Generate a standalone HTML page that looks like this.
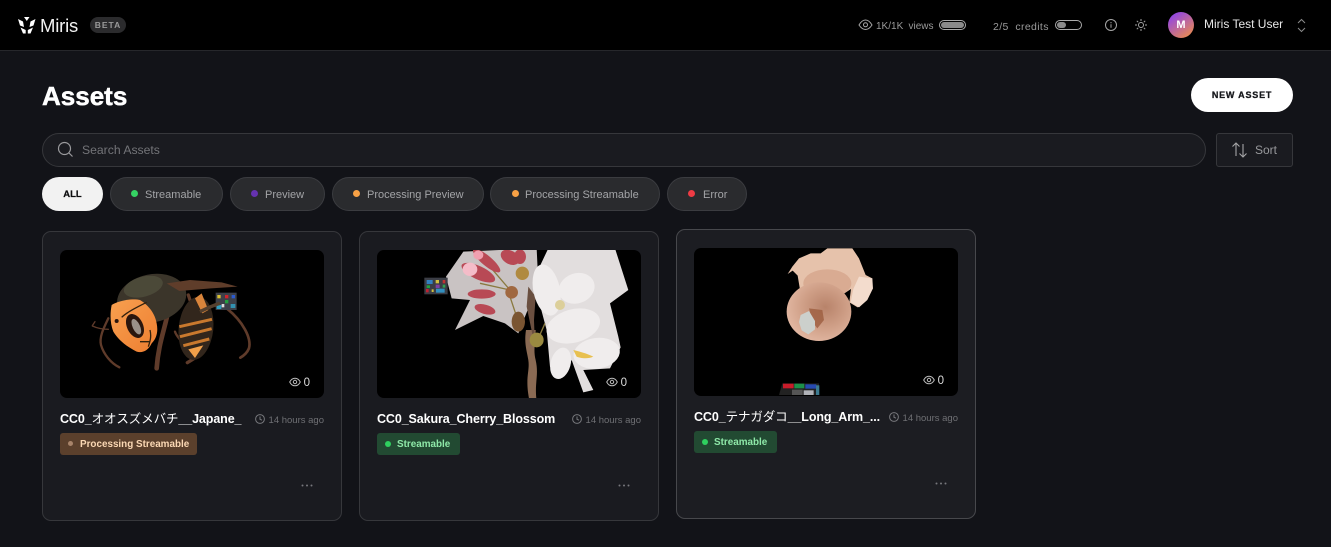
<!DOCTYPE html>
<html><head><meta charset="utf-8"><title>Assets</title>
<style>
*{box-sizing:border-box;margin:0;padding:0}
html,body{width:1331px;height:547px;overflow:hidden;background:#121318;font-family:"Liberation Sans","Noto Sans CJK JP",sans-serif;color:#fff}
.a{position:absolute;white-space:nowrap}
.top{position:absolute;left:0;top:0;width:1331px;height:51px;background:#000;border-bottom:1px solid #26272b}
.pill{position:absolute;top:177px;height:34px;border-radius:17px;background:#2a2b2e;border:1px solid #3b3c40;font-size:11px;color:#a3a4a7;line-height:34px;white-space:nowrap}
.pill i{position:absolute;top:12px;width:7px;height:7px;border-radius:50%}
.card{position:absolute;width:300px;height:290px;background:#1a1b20;border:1px solid #36373b;border-radius:9px}
.img{position:absolute;left:17px;top:18px;width:264px;height:148px;border-radius:7px;background:#000;overflow:hidden}
.img>svg{position:absolute;left:0;top:0}
.title{position:absolute;left:17px;top:179px;font-size:12.5px;font-weight:bold;line-height:16px;white-space:nowrap;letter-spacing:-.1px}
.title span{font-weight:normal}
.time{position:absolute;right:17px;top:182px;font-size:9.5px;color:#6f7074;line-height:13px;white-space:nowrap}
.clock{position:absolute;left:212px;top:182px}
.tag{position:absolute;left:17px;top:201px;height:22px;border-radius:3px;font-size:9.9px;font-weight:bold;line-height:24px;white-space:nowrap}
.tag i{position:absolute;left:8px;top:8px;width:6px;height:6px;border-radius:50%}
.green{background:#224a32;color:#8ee8a8;width:83px;padding-left:20px}
.green i{background:#2fd05f}
.brown{background:#5b402c;color:#fbd8b4;width:137px;padding-left:20px}
.brown i{background:#a8846a;width:5px;height:5px}
.dots{position:absolute;left:258px;top:252px;width:12px;height:3px}
.views{position:absolute;right:14px;bottom:9px;font-size:11.500px;color:#ddd;line-height:12px;white-space:nowrap}
</style></head><body>
<div class="top"></div>
<svg class="a" style="left:18px;top:17px" width="18" height="17" viewBox="0 0 18 17"><path d="M0 2l5 2.500L6 10 2 8.500z M17.500 2l-5 2.500L11.500 10l4-1.500z M6 0h5.500L8.800 4z M2.500 10.500l5.200 2.500v3.500H5z M15 10.500L9.800 13v3.500h2.700z" fill="#fff"/></svg>
<div class="a" style="left:40px;top:15px;font-size:18.500px;line-height:22px;color:#f2f2f2;letter-spacing:-.2px">Miris</div>
<div class="a" style="left:90px;top:17px;width:36px;height:16px;border-radius:8px;background:#2b2b2d;color:#9a9a9a;font-size:8.500px;font-weight:bold;line-height:17px;text-align:center;letter-spacing:1px">BETA</div>
<svg class="a" style="left:858px;top:19px" width="15" height="12" viewBox="0 0 15 12" fill="none" stroke="#a5a5a5"><path d="M1 6c2-3.500 4-5 6.500-5S12 2.500 14 6c-2 3-4 4.500-6.500 4.500S3 9 1 6z"/><circle cx="7.500" cy="5.800" r="2"/></svg>
<div class="a" style="left:876px;top:20px;font-size:10px;line-height:14px;color:#9a9a9a;word-spacing:2.500px">1K/1K views</div>
<div class="a" style="left:939px;top:20px;width:27px;height:10px;border:1px solid #aaa;border-radius:5px"><div style="position:absolute;left:1px;top:1px;right:1px;bottom:1px;border-radius:4px;background:#8a8a8a"></div></div>
<div class="a" style="left:993px;top:20px;font-size:10.500px;line-height:14px;color:#9a9a9a;word-spacing:3.500px;letter-spacing:.35px">2/5 credits</div>
<div class="a" style="left:1055px;top:20px;width:27px;height:10px;border:1px solid #aaa;border-radius:5px"><div style="position:absolute;left:1px;top:1px;width:9px;bottom:1px;border-radius:4px;background:#8a8a8a"></div></div>
<svg class="a" style="left:1104px;top:18px" width="14" height="14" viewBox="0 0 14 14" fill="none" stroke="#a5a5a5"><circle cx="7" cy="7" r="5.500"/><path d="M7 6.300v3.500M7 4v1.200"/></svg>
<svg class="a" style="left:1134px;top:18px" width="14" height="14" viewBox="0 0 14 14" fill="none" stroke="#a5a5a5"><circle cx="7" cy="7" r="2.500"/><path d="M7 1v2M7 11v2M1 7h2M11 7h2M2.800 2.800l1.400 1.400M9.800 9.800l1.400 1.400M2.800 11.200l1.400-1.400M9.800 4.200l1.400-1.400"/></svg>
<div class="a" style="left:1168px;top:12px;width:26px;height:26px;border-radius:50%;background:linear-gradient(145deg,#9448e0 15%,#e98a52 90%);font-size:11px;font-weight:bold;line-height:27px;text-align:center">M</div>
<div class="a" style="left:1204px;top:17px;font-size:12px;line-height:15px;color:#e8e8e8">Miris Test User</div>
<svg class="a" style="left:1296px;top:18px" width="11" height="15" viewBox="0 0 11 15" fill="none" stroke="#8a8a8a"><path d="M2 5l3.500-3.500L9 5M2 10l3.500 3.500L9 10"/></svg>

<div class="a" style="left:42px;top:81px;font-size:26px;font-weight:bold;line-height:30px;color:#fff;-webkit-text-stroke:.5px #fff">Assets</div>
<div class="a" style="left:1191px;top:78px;width:102px;height:34px;border-radius:17px;background:#fff;color:#17181c;font-size:9px;font-weight:bold;line-height:34px;text-align:center;letter-spacing:.8px;-webkit-text-stroke:.3px #17181c">NEW ASSET</div>

<div class="a" style="left:42px;top:133px;width:1164px;height:34px;border-radius:17px;background:#1a1b20;border:1px solid #36373b"></div>
<svg class="a" style="left:57px;top:141px" width="17" height="17" viewBox="0 0 17 17" fill="none" stroke="#9a9a9d" stroke-width="1.200"><circle cx="7.500" cy="7.500" r="6"/><path d="M12 12l3.500 3.500"/></svg>
<div class="a" style="left:82px;top:143px;font-size:12.200px;line-height:15px;color:#737478">Search Assets</div>
<div class="a" style="left:1216px;top:133px;width:77px;height:34px;border-radius:3px;background:#1a1b20;border:1px solid #36373b"></div>
<svg class="a" style="left:1231px;top:141px" width="17" height="18" viewBox="0 0 17 18" fill="none" stroke="#a5a5a7" stroke-width="1.100"><path d="M5 15V2M1.500 5.500L5 2l3.500 3.500M12 3v13M8.500 12.500L12 16l3.500-3.500"/></svg>
<div class="a" style="left:1255px;top:143px;font-size:12px;line-height:15px;color:#98999c">Sort</div>

<div class="a" style="left:42px;top:177px;width:61px;height:34px;border-radius:17px;background:#f2f2f2;color:#0d0d0f;font-size:9.500px;font-weight:bold;line-height:35px;text-align:center;-webkit-text-stroke:.2px #0d0d0f">ALL</div>
<div class="pill" style="left:110px;width:113px;padding-left:34px"><i style="left:20px;background:#35d263"></i>Streamable</div>
<div class="pill" style="left:230px;width:95px;padding-left:34px"><i style="left:20px;background:#6532b0"></i>Preview</div>
<div class="pill" style="left:332px;width:152px;padding-left:34px"><i style="left:20px;background:#f8a145"></i>Processing Preview</div>
<div class="pill" style="left:490px;width:170px;padding-left:34px"><i style="left:21px;background:#f8a145"></i>Processing Streamable</div>
<div class="pill" style="left:667px;width:80px;padding-left:35px"><i style="left:20px;background:#ee3b44"></i>Error</div>

<!-- CARD 1 -->
<div class="card" style="left:42px;top:231px">
<div class="img">
<svg width="264" height="148" viewBox="60 250 264 148"><defs><filter id="b"><feGaussianBlur stdDeviation=".6"/></filter><linearGradient id="o" x1="0" y1="0" x2="1" y2="1"><stop offset="0" stop-color="#f7a050"/><stop offset="1" stop-color="#ee7e30"/></linearGradient></defs>
<g transform="translate(40,230) scale(.3333)" filter="url(#b)">
<g fill="none" stroke="#5e3a2a" stroke-linecap="round">
<path d="M205 265c-12 25-28 55-22 80 8 28 30 55 55 67" stroke-width="7"/>
<path d="M205 298c-15 0-30-2-48-10M165 275l-8 12" stroke-width="4"/>
<path d="M385 240c-8 50-30 100-35 175" stroke-width="14"/>
<path d="M445 195c20 60 45 120 35 170-5 15-25 25-38 33" stroke-width="10"/>
<path d="M490 240c25-10 50-25 70-5 50 40 75 90 67 120-5 12-15 22-26 28" stroke-width="8"/>
<path d="M405 305c5 15 20 30 33 42" stroke-width="7"/>
</g>
<ellipse cx="335" cy="205" rx="105" ry="72" transform="rotate(-12 335 205)" fill="#3a342a"/>
<ellipse cx="310" cy="170" rx="60" ry="30" transform="rotate(-15 310 170)" fill="#4c4839"/>
<path d="M380 160l70-10 95 7 48 13-80 5-95 8z" fill="#5e3c2a"/>
<ellipse cx="468" cy="295" rx="52" ry="95" transform="rotate(6 468 295)" fill="#33261a"/>
<g fill="none" stroke="#c9792e" stroke-width="9"><path d="M418 290l98-22M420 320l95-24M430 347l78-20"/></g>
<path d="M465 205l20-15 20 50-18 10z" fill="#d9843a"/>
<path d="M445 358l45-12-25 38z" fill="#f2a04a"/>
<path d="M215 225c25-15 65-20 85-15 25 15 45 40 50 70 5 25 0 45-15 60-10 20-25 30-45 25-30-15-55-35-70-60-10-25-10-55-5-80z" fill="url(#o)"/>
<path d="M245 262c15-15 45-30 75-45M330 300c5 20 0 35-5 50M300 335l30 0" stroke="#33200f" stroke-width="4" fill="none"/>
<ellipse cx="285" cy="288" rx="24" ry="38" transform="rotate(-25 285 288)" fill="#2a1410"/>
<ellipse cx="289" cy="290" rx="11" ry="25" transform="rotate(-25 289 290)" fill="#9a9088"/>
<circle cx="230" cy="273" r="6" fill="#2a1410"/>
<rect x="527" y="188" width="63" height="52" fill="#3c4048"/>
<rect x="532" y="195" width="10" height="10" fill="#d8c030"/><rect x="555" y="195" width="10" height="10" fill="#d0202a"/><rect x="575" y="195" width="10" height="10" fill="#2a5ad0"/><rect x="555" y="210" width="10" height="10" fill="#20a040"/><rect x="530" y="225" width="14" height="12" fill="#30a0c0"/><rect x="545" y="222" width="8" height="10" fill="#ddd"/><rect x="572" y="222" width="14" height="12" fill="#3090b0"/>
<path d="M480 245c20-10 40-20 60-25" stroke="#54402e" stroke-width="10" fill="none"/>
</g></svg>
<div class="views"><svg width="12" height="10" viewBox="0 0 12 10" fill="none" stroke="#bbb" style="vertical-align:-1px;margin-right:3px"><path d="M.7 5C2 2.500 4 1.200 6 1.200S10 2.500 11.300 5C10 7.500 8 8.800 6 8.800S2 7.500.7 5z"/><circle cx="6" cy="5" r="1.700"/></svg>0</div>
</div>
<div class="title">CC0_<span>オオスズメバチ</span>__Japane_</div>
<svg class="clock" width="10" height="10" viewBox="0 0 10 10" fill="none" stroke="#77787c"><circle cx="5" cy="5" r="4.400"/><path d="M5 2.500V5.300l2 .8"/></svg>
<div class="time">14 hours ago</div>
<div class="tag brown"><i></i>Processing Streamable</div>
<svg class="dots" viewBox="0 0 12 3" fill="#77787c"><circle cx="1.500" cy="1.500" r="1"/><circle cx="6" cy="1.500" r="1"/><circle cx="10.500" cy="1.500" r="1"/></svg>
</div>

<!-- CARD 2 -->
<div class="card" style="left:359px;top:231px">
<div class="img">
<svg width="264" height="148" viewBox="377 250 264 148"><defs><filter id="c"><feGaussianBlur stdDeviation=".7"/></filter></defs>
<g transform="translate(370,240) scale(.3333)" filter="url(#c)">
<path d="M228 110L280 35L500 25L505 130L445 280L405 250L340 228L255 270L300 180L245 175z" fill="#c9c3c3"/>
<path d="M468 270c-6 40 2 60 7 90 5 35-10 50 2 115h22c-5-50 8-70-2-115-8-30 0-60 0-90z" fill="#8a6a52"/>
<path d="M535 25L735 25L775 150L720 190L745 290L752 322L720 385L640 390L670 450L640 457L605 360L570 417L540 380L530 270L490 120z" fill="#e2dede"/>
<path d="M495 320l-25-120 5-60 22 30-5 70z" fill="#6a5040"/>
<g stroke="#8a7a40" stroke-width="4" fill="none"><path d="M330 130l90 20M360 80l60 70M420 170l20 60M525 250l-22 50"/></g>
<g fill="#f0eded">
<ellipse cx="530" cy="150" rx="40" ry="78" transform="rotate(-12 530 150)"/><ellipse cx="620" cy="145" rx="55" ry="45" transform="rotate(-20 620 145)"/><ellipse cx="610" cy="258" rx="82" ry="50" transform="rotate(-15 610 258)"/><ellipse cx="572" cy="370" rx="30" ry="48" transform="rotate(15 572 370)"/><ellipse cx="680" cy="340" rx="70" ry="46" transform="rotate(-8 680 340)"/>
</g>
<path d="M610 330c20 5 40 10 60 20-15 8-40 5-50 0z" fill="#e8c050"/>
<circle cx="570" cy="195" r="15" fill="#dccf9a"/>
<g fill="#b84a55"><ellipse cx="325" cy="98" rx="55" ry="20" transform="rotate(25 325 98)"/><ellipse cx="350" cy="62" rx="52" ry="15" transform="rotate(40 350 62)"/><ellipse cx="335" cy="162" rx="42" ry="14"/><ellipse cx="345" cy="208" rx="32" ry="14" transform="rotate(15 345 208)"/><ellipse cx="420" cy="52" rx="30" ry="20" transform="rotate(30 420 52)"/><ellipse cx="450" cy="50" rx="18" ry="22"/></g>
<ellipse cx="300" cy="88" rx="22" ry="20" fill="#f4bcc8"/><ellipse cx="325" cy="45" rx="15" ry="14" fill="#f0a0b0"/>
<circle cx="457" cy="100" r="20" fill="#b08a40"/><circle cx="425" cy="157" r="19" fill="#a06840"/><ellipse cx="445" cy="245" rx="20" ry="30" fill="#7a5430"/><ellipse cx="500" cy="300" rx="21" ry="22" fill="#9a8a40"/>
<rect x="163" y="113" width="70" height="50" fill="#3a3c44"/>
<rect x="170" y="120" width="18" height="12" fill="#3080c0"/><rect x="197" y="120" width="10" height="10" fill="#d0c040"/><rect x="218" y="120" width="8" height="10" fill="#c03030"/><rect x="170" y="136" width="10" height="8" fill="#20a040"/><rect x="197" y="134" width="12" height="10" fill="#8040a0"/><rect x="218" y="134" width="8" height="9" fill="#30a050"/><rect x="168" y="147" width="8" height="10" fill="#c02030"/><rect x="198" y="146" width="26" height="12" fill="#3090c0"/><rect x="185" y="148" width="6" height="8" fill="#d0c040"/>
</g></svg>
<div class="views"><svg width="12" height="10" viewBox="0 0 12 10" fill="none" stroke="#bbb" style="vertical-align:-1px;margin-right:3px"><path d="M.7 5C2 2.500 4 1.200 6 1.200S10 2.500 11.300 5C10 7.500 8 8.800 6 8.800S2 7.500.7 5z"/><circle cx="6" cy="5" r="1.700"/></svg>0</div>
</div>
<div class="title">CC0_Sakura_Cherry_Blossom</div>
<svg class="clock" width="10" height="10" viewBox="0 0 10 10" fill="none" stroke="#77787c"><circle cx="5" cy="5" r="4.400"/><path d="M5 2.500V5.300l2 .8"/></svg>
<div class="time">14 hours ago</div>
<div class="tag green"><i></i>Streamable</div>
<svg class="dots" viewBox="0 0 12 3" fill="#77787c"><circle cx="1.500" cy="1.500" r="1"/><circle cx="6" cy="1.500" r="1"/><circle cx="10.500" cy="1.500" r="1"/></svg>
</div>

<!-- CARD 3 -->
<div class="card" style="left:676px;top:229px;border-color:#47484c;background:#1c1d22">
<div class="img">
<svg width="264" height="148" viewBox="695 248 264 148"><defs><filter id="d"><feGaussianBlur stdDeviation="1"/></filter><radialGradient id="s" cx=".6" cy=".42" r=".65"><stop offset="0" stop-color="#b8836a"/><stop offset=".55" stop-color="#d0a088"/><stop offset="1" stop-color="#e3b9a4"/></radialGradient></defs>
<g transform="translate(685,240) scale(.3333)" filter="url(#d)">
<path d="M325 80l20-25 35-15 30 0 20-15h75l20 30 20 50 20 10-2 30-17 35-25 22-25-15 5-40-30 20-120 0-10-60-15-15-15 10z" fill="#e6c2ab"/>
<path d="M525 110l40 5 2 30-17 35-25 22-25-15 8-40z" fill="#f3dccd"/>
<ellipse cx="430" cy="130" rx="72" ry="42" fill="#d9ab92"/>
<ellipse cx="405" cy="215" rx="97" ry="88" fill="url(#s)"/>
<path d="M375 205l40 5 5 30-20 25-15-20z" fill="#9a5a3c" opacity=".75"/>
<path d="M350 225l25-12 18 30 0 25-20 15-20-12-8-25z" fill="#ccd0cc"/>
<path d="M295 430h110v35H285z" fill="#222"/>
<rect x="297" y="431" width="32" height="14" fill="#c81c2c"/><rect x="331" y="431" width="30" height="14" fill="#1c9048"/><rect x="364" y="433" width="33" height="13" fill="#2848b0"/><rect x="324" y="449" width="32" height="16" fill="#555"/><rect x="359" y="451" width="30" height="14" fill="#b0b2b8"/><rect x="396" y="436" width="10" height="29" fill="#3a7a90"/>
</g></svg>
<div class="views"><svg width="12" height="10" viewBox="0 0 12 10" fill="none" stroke="#bbb" style="vertical-align:-1px;margin-right:3px"><path d="M.7 5C2 2.500 4 1.200 6 1.200S10 2.500 11.300 5C10 7.500 8 8.800 6 8.800S2 7.500.7 5z"/><circle cx="6" cy="5" r="1.700"/></svg>0</div>
</div>
<div class="title">CC0_<span>テナガダコ</span>__Long_Arm_...</div>
<svg class="clock" width="10" height="10" viewBox="0 0 10 10" fill="none" stroke="#77787c"><circle cx="5" cy="5" r="4.400"/><path d="M5 2.500V5.300l2 .8"/></svg>
<div class="time">14 hours ago</div>
<div class="tag green"><i></i>Streamable</div>
<svg class="dots" viewBox="0 0 12 3" fill="#77787c"><circle cx="1.500" cy="1.500" r="1"/><circle cx="6" cy="1.500" r="1"/><circle cx="10.500" cy="1.500" r="1"/></svg>
</div>
</body></html>
